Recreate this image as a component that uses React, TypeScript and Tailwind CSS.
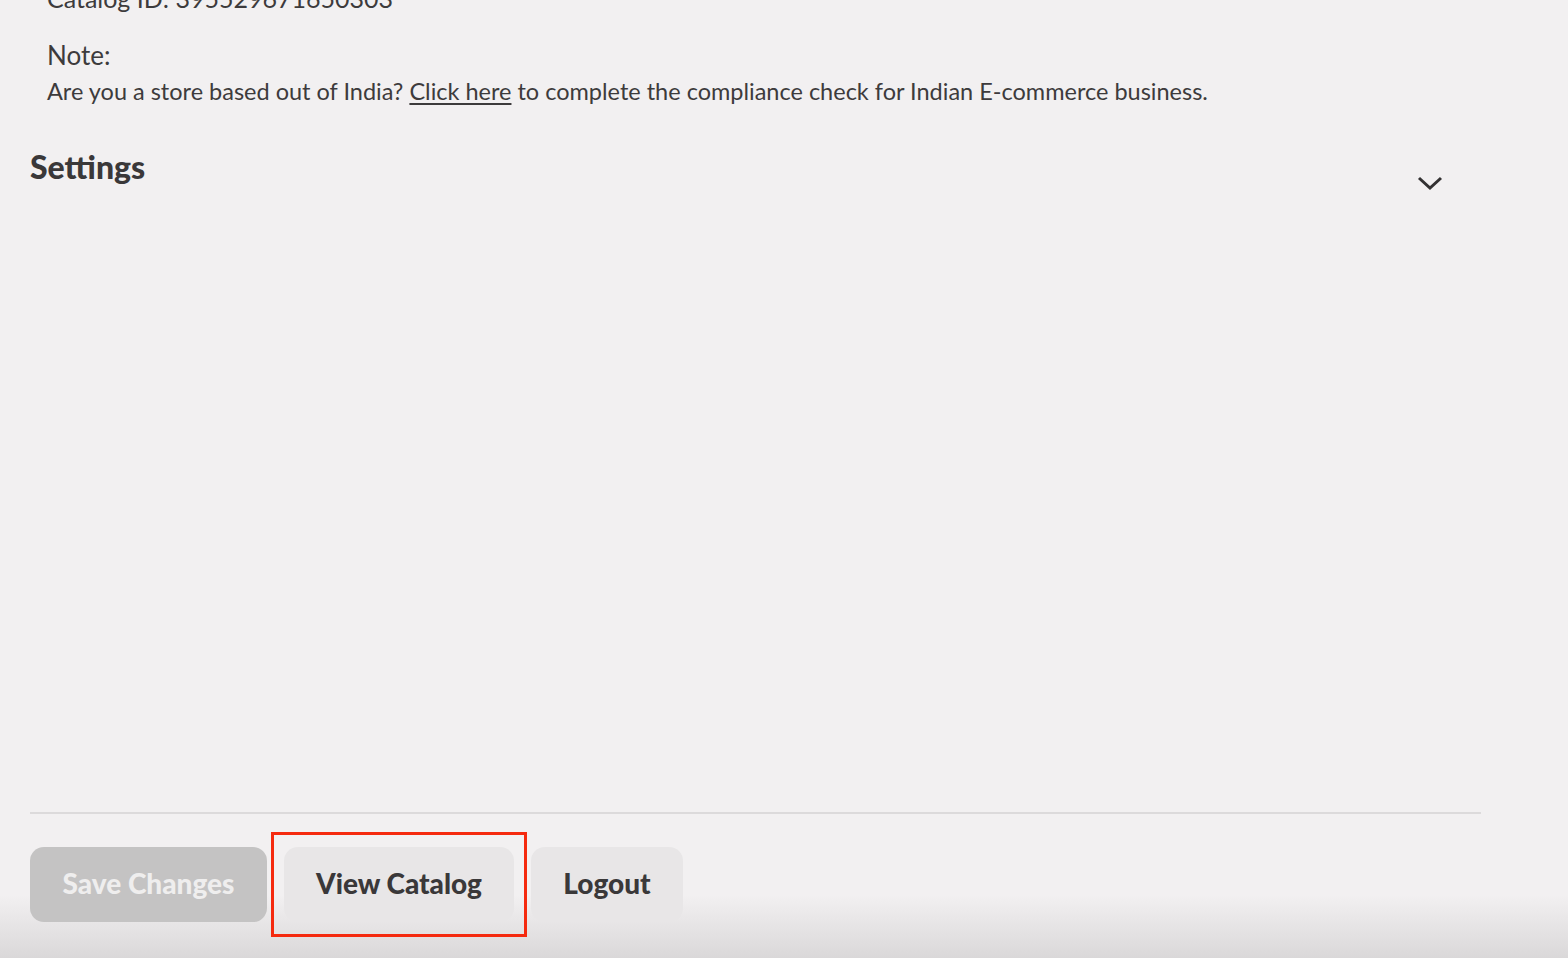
import React from "react";

export default function App() {
  return (
    <div className="relative w-[1568px] h-[958px] overflow-hidden bg-[linear-gradient(to_bottom,#f2f0f1_895px,#dad8d9_958px)] text-[#3d3b3c]" style={{ fontFamily: "Lato, 'Noto Sans', sans-serif" }}>
      <div className="flex flex-col h-full">
        <div className="pl-[47px] -mt-[17px]">
          <div className="text-[25px] leading-[30px]">Catalog ID: 395529671650303</div>
          <div className="mt-[26px] text-[26px] leading-[32px]">Note:</div>
          <div className="mt-[4px] text-[23.5px] leading-[32px]">
            Are you a store based out of India? <span className="underline underline-offset-[3px]">Click here</span> to complete the compliance check for Indian E-commerce business.
          </div>
        </div>
        <div className="flex items-start justify-between pl-[30px] pr-[124px] mt-[40px]">
          <div className="text-[32px] font-black leading-[40px] text-[#3a3839]">Settings</div>
          <svg width="28" height="18" viewBox="0 0 28 18" className="mt-[27px]">
            <path d="M3 4 L14 14 L25 4" fill="none" stroke="#333132" strokeWidth="3" />
          </svg>
        </div>
        <div className="flex-1" />
        <div className="mx-[30px] w-[1451px] h-[2px] bg-[#dcdadb]" />
        <div className="flex items-center pl-[30px] mt-[18px] mb-[21px] gap-[4px]">
          <button className="w-[237px] h-[75px] rounded-[14px] bg-[#c4c3c3] text-[#efeeee] text-[28px] font-black leading-[32px] pb-[3px]">Save Changes</button>
          <div className="border-[3px] border-[#f52a0f] px-[10px] py-[12px]">
            <button className="w-[230px] h-[75px] rounded-[14px] bg-[#e8e6e7] text-[#3a3839] text-[28px] font-black leading-[32px] pb-[3px]">View Catalog</button>
          </div>
          <button className="w-[152px] h-[75px] rounded-[14px] bg-[#e8e6e7] text-[#3a3839] text-[28px] font-black leading-[32px] pb-[3px]">Logout</button>
        </div>
      </div>
    </div>
  );
}
